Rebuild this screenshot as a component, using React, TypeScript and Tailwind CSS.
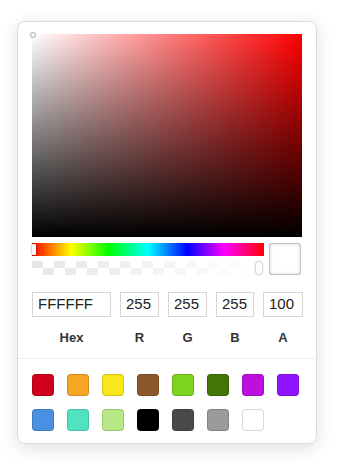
import React from "react";

const swatches = [
  "#D0021B", "#F5A623", "#F8E71C", "#8B572A", "#7ED321", "#417505", "#BD10E0", "#9013FE",
  "#4A90E2", "#50E3C2", "#B8E986", "#000000", "#4A4A4A", "#9B9B9B", "#FFFFFF",
];

const fields = [
  { label: "Hex", value: "FFFFFF", w: "w-[79px]" },
  { label: "R", value: "255", w: "w-[39px]" },
  { label: "G", value: "255", w: "w-[39px]" },
  { label: "B", value: "255", w: "w-[38px]" },
  { label: "A", value: "100", w: "w-[40px]" },
];

// 11x7 checker cells, like the scaled-down alpha strip
const checker =
  "bg-[linear-gradient(to_right,#e6e6e6_50%,transparent_50%),linear-gradient(to_right,transparent_50%,#e6e6e6_50%)] bg-[length:22px_7px] bg-[position:0_0,0_7px] bg-repeat-x";

export default function App() {
  return (
    <div className="min-h-screen bg-white pt-[21px] pl-[17px] font-['Liberation_Sans',Arial,sans-serif]">
      <div className="w-[300px] rounded-lg border border-[#dcdcdc] bg-white shadow-[0_4px_18px_rgba(0,0,0,0.13)]">
        <div className="pl-[14px] pr-[15px] pt-[12px]">
          {/* saturation */}
          <div className="relative h-[203px] w-[270px] bg-[#ff0000]">
            <div className="absolute inset-0 bg-gradient-to-r from-white to-transparent" />
            <div className="absolute inset-0 bg-gradient-to-t from-black to-transparent" />
            <div className="absolute -left-[2px] -top-[2px] h-[6px] w-[6px] rounded-full shadow-[0_0_0_1.5px_#fff,inset_0_0_1px_1px_rgba(0,0,0,0.3)]" />
          </div>

          <div className="mt-[6px] flex gap-[5px]">
            <div className="flex w-[233px] flex-col gap-[5px]">
              <div className="relative h-[13px] bg-[linear-gradient(to_right,#f00_0%,#ff0_17%,#0f0_33%,#0ff_50%,#00f_67%,#f0f_83%,#f00_100%)]">
                <div className="absolute left-0 top-[1px] h-[11px] w-[4px] rounded-[1px] bg-white shadow-[0_0_2px_rgba(0,0,0,0.6)]" />
              </div>
              <div className={`relative h-[14px] ${checker}`}>
                <div className="absolute inset-0 bg-gradient-to-r from-transparent to-white" />
                <div className="absolute right-[2px] top-[1px] h-[12px] w-[6px] rounded-[2px] bg-white shadow-[0_0_2px_rgba(0,0,0,0.6)]" />
              </div>
            </div>
            <div className="h-[32px] w-[32px] rounded-[3px] bg-white shadow-[inset_0_0_0_1px_rgba(0,0,0,0.15),inset_0_0_4px_rgba(0,0,0,0.25)]" />
          </div>

          {/* fields */}
          <div className="mt-[17px] flex gap-[9px]">
            {fields.map((f) => (
              <div key={f.label} className="flex flex-col items-center">
                <div
                  className={`${f.w} h-[25px] border-[1.5px] border-[#d6d6d6] px-[5px] text-[15px] leading-[22px] text-[#222]`}
                >
                  {f.value}
                </div>
                <span className="mt-[12px] text-[13px] font-bold leading-[17px] text-[#333]">{f.label}</span>
              </div>
            ))}
          </div>
        </div>

        <div className="mt-[12px] border-t border-[#eeeeee]" />

        <div className="grid w-[300px] grid-cols-[repeat(8,22px)] gap-x-[13px] gap-y-[13px] pb-[12px] pl-[14px] pt-[15px]">
          {swatches.map((c) => (
            <div
              key={c}
              className="h-[22px] w-[22px] rounded-[4px] shadow-[inset_0_0_0_1px_rgba(0,0,0,0.15)]"
              style={{ backgroundColor: c }}
            />
          ))}
        </div>
      </div>
    </div>
  );
}
